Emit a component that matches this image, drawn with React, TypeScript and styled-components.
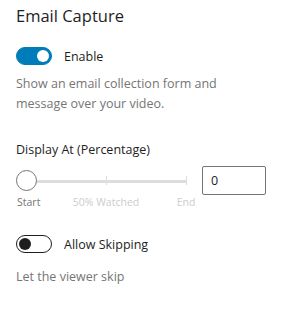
import React from "react";
import styled, { createGlobalStyle } from "styled-components";

const Global = createGlobalStyle`
  html, body { margin: 0; padding: 0; background: #fff; }
  body { font-family: "Open Sans", "Noto Sans", sans-serif; color: #1e1e1e; }
`;

const Panel = styled.div`
  width: 287px;
  padding: 4px 16px 0 16px;
  box-sizing: border-box;
  display: flex;
  flex-direction: column;
`;

const Title = styled.h2`
  margin: 0;
  font-size: 16.5px;
  font-weight: 400;
  line-height: 24px;
  color: #1e1e1e;
`;

const ToggleRow = styled.label<{ $mt: number }>`
  display: flex;
  align-items: center;
  gap: 12px;
  height: 18px;
  margin-top: ${(p) => p.$mt}px;
  font-size: 12.5px;
  color: #1e1e1e;
`;

const Track = styled.span<{ $on: boolean }>`
  position: relative;
  width: 36px;
  height: 18px;
  box-sizing: border-box;
  border-radius: 9px;
  border: 1px solid ${(p) => (p.$on ? "#007cba" : "#1e1e1e")};
  background: ${(p) => (p.$on ? "#007cba" : "#fff")};
  flex: none;
`;

const Knob = styled.span<{ $on: boolean }>`
  position: absolute;
  top: 2px;
  left: ${(p) => (p.$on ? "20px" : "2px")};
  width: 12px;
  height: 12px;
  border-radius: 50%;
  background: ${(p) => (p.$on ? "#fff" : "#1e1e1e")};
`;

const Help = styled.p<{ $mt: number }>`
  margin: ${(p) => p.$mt}px 0 0 0;
  font-size: 12.5px;
  line-height: 20px;
  color: #757575;
`;

const FieldLabel = styled.div`
  margin-top: 26px;
  font-size: 12.5px;
  line-height: 20px;
  color: #1e1e1e;
`;

const SliderRow = styled.div`
  margin-top: 6px;
  display: flex;
  align-items: flex-start;
  gap: 12px;
`;

const SliderCol = styled.div`
  flex: none;
  width: 174px;
  display: flex;
  flex-direction: column;
`;

const Rail = styled.div`
  position: relative;
  height: 29px;
`;

const RailLine = styled.div`
  position: absolute;
  left: 11px;
  right: 3px;
  top: 14px;
  height: 3px;
  background: #dddddd;
`;

const Tick = styled.div<{ $left: number }>`
  position: absolute;
  top: 10px;
  left: ${(p) => p.$left}px;
  width: 1px;
  height: 9px;
  background: #dddddd;
`;

const Thumb = styled.div`
  position: absolute;
  left: 0;
  top: 4px;
  width: 21px;
  height: 21px;
  box-sizing: border-box;
  border-radius: 50%;
  border: 1px solid #757575;
  background: #fff;
`;

const Marks = styled.div`
  position: relative;
  height: 14px;
  font-size: 10.5px;
  line-height: 14px;
`;

const Mark = styled.span<{ $center: number; $active?: boolean; $align?: string }>`
  position: absolute;
  top: 0;
  left: ${(p) => p.$center}px;
  transform: ${(p) => (p.$align === "start" ? "none" : "translateX(-50%)")};
  white-space: nowrap;
  color: ${(p) => (p.$active ? "#757575" : "#cccccc")};
`;

const NumberBox = styled.input`
  width: 64px;
  height: 29px;
  box-sizing: border-box;
  border: 1px solid #757575;
  border-radius: 2px;
  padding: 0 8px;
  font-family: "Open Sans", "Noto Sans", sans-serif;
  font-size: 12.5px;
  color: #1e1e1e;
  outline: none;
`;

export default function App() {
  return (
    <>
      <Global />
      <Panel>
        <Title>Email Capture</Title>
        <ToggleRow $mt={19}>
          <Track $on>
            <Knob $on />
          </Track>
          Enable
        </ToggleRow>
        <Help $mt={9}>
          Show an email collection form and
          <br />
          message over your video.
        </Help>
        <FieldLabel>Display At (Percentage)</FieldLabel>
        <SliderRow>
          <SliderCol>
            <Rail>
              <RailLine />
              <Tick $left={90} />
              <Tick $left={170} />
              <Thumb />
            </Rail>
            <Marks>
              <Mark $center={1} $align="start" $active>
                Start
              </Mark>
              <Mark $center={90}>50% Watched</Mark>
              <Mark $center={170}>End</Mark>
            </Marks>
          </SliderCol>
          <NumberBox defaultValue="0" />
        </SliderRow>
        <ToggleRow $mt={26}>
          <Track $on={false}>
            <Knob $on={false} />
          </Track>
          Allow Skipping
        </ToggleRow>
        <Help $mt={14}>Let the viewer skip</Help>
      </Panel>
    </>
  );
}
